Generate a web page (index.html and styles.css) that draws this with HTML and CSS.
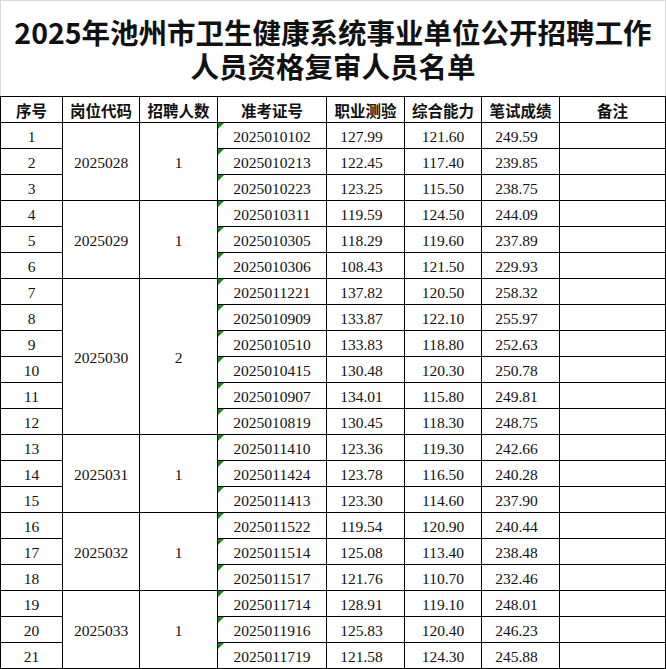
FILE: index.html
```html
<!DOCTYPE html>
<html lang="zh-CN">
<head>
<meta charset="utf-8">
<title>2025年池州市卫生健康系统事业单位公开招聘工作人员资格复审人员名单</title>
<link rel="stylesheet" href="styles.css">
</head>
<body>
<div class="sheet">
  <div class="title">
    <div class="title-line">2025年池州市卫生健康系统事业单位公开招聘工作</div>
    <div class="title-line">人员资格复审人员名单</div>
  </div>
  <table class="grid">
    <colgroup>
      <col class="c1"><col class="c2"><col class="c3"><col class="c4"><col class="c5"><col class="c6"><col class="c7"><col class="c8">
    </colgroup>
    <thead>
      <tr><th>序号</th><th>岗位代码</th><th>招聘人数</th><th>准考证号</th><th>职业测验</th><th>综合能力</th><th>笔试成绩</th><th>备注</th></tr>
    </thead>
    <tbody>
      <tr><td>1</td><td rowspan="3">2025028</td><td rowspan="3">1</td><td class="txt">2025010102</td><td class="sl">127.99</td><td>121.60</td><td class="sl">249.59</td><td></td></tr>
      <tr><td>2</td><td class="txt">2025010213</td><td class="sl">122.45</td><td>117.40</td><td class="sl">239.85</td><td></td></tr>
      <tr><td>3</td><td class="txt">2025010223</td><td class="sl">123.25</td><td>115.50</td><td class="sl">238.75</td><td></td></tr>
      <tr><td>4</td><td rowspan="3">2025029</td><td rowspan="3">1</td><td class="txt">2025010311</td><td class="sl">119.59</td><td>124.50</td><td class="sl">244.09</td><td></td></tr>
      <tr><td>5</td><td class="txt">2025010305</td><td class="sl">118.29</td><td>119.60</td><td class="sl">237.89</td><td></td></tr>
      <tr><td>6</td><td class="txt">2025010306</td><td class="sl">108.43</td><td>121.50</td><td class="sl">229.93</td><td></td></tr>
      <tr><td>7</td><td rowspan="6">2025030</td><td rowspan="6">2</td><td class="txt">2025011221</td><td class="sl">137.82</td><td>120.50</td><td class="sl">258.32</td><td></td></tr>
      <tr><td>8</td><td class="txt">2025010909</td><td class="sl">133.87</td><td>122.10</td><td class="sl">255.97</td><td></td></tr>
      <tr><td>9</td><td class="txt">2025010510</td><td class="sl">133.83</td><td>118.80</td><td class="sl">252.63</td><td></td></tr>
      <tr><td>10</td><td class="txt">2025010415</td><td class="sl">130.48</td><td>120.30</td><td class="sl">250.78</td><td></td></tr>
      <tr><td>11</td><td class="txt">2025010907</td><td class="sl">134.01</td><td>115.80</td><td class="sl">249.81</td><td></td></tr>
      <tr><td>12</td><td class="txt">2025010819</td><td class="sl">130.45</td><td>118.30</td><td class="sl">248.75</td><td></td></tr>
      <tr><td>13</td><td rowspan="3">2025031</td><td rowspan="3">1</td><td class="txt">2025011410</td><td class="sl">123.36</td><td>119.30</td><td class="sl">242.66</td><td></td></tr>
      <tr><td>14</td><td class="txt">2025011424</td><td class="sl">123.78</td><td>116.50</td><td class="sl">240.28</td><td></td></tr>
      <tr><td>15</td><td class="txt">2025011413</td><td class="sl">123.30</td><td>114.60</td><td class="sl">237.90</td><td></td></tr>
      <tr><td>16</td><td rowspan="3">2025032</td><td rowspan="3">1</td><td class="txt">2025011522</td><td class="sl">119.54</td><td>120.90</td><td class="sl">240.44</td><td></td></tr>
      <tr><td>17</td><td class="txt">2025011514</td><td class="sl">125.08</td><td>113.40</td><td class="sl">238.48</td><td></td></tr>
      <tr><td>18</td><td class="txt">2025011517</td><td class="sl">121.76</td><td>110.70</td><td class="sl">232.46</td><td></td></tr>
      <tr><td>19</td><td rowspan="3">2025033</td><td rowspan="3">1</td><td class="txt">2025011714</td><td class="sl">128.91</td><td>119.10</td><td class="sl">248.01</td><td></td></tr>
      <tr><td>20</td><td class="txt">2025011916</td><td class="sl">125.83</td><td>120.40</td><td class="sl">246.23</td><td></td></tr>
      <tr><td>21</td><td class="txt">2025011719</td><td class="sl">121.58</td><td>124.30</td><td class="sl">245.88</td><td></td></tr>
    </tbody>
  </table>
</div>
</body>
</html>
```
FILE: styles.css
```css
html, body {
  margin: 0;
  padding: 0;
  background: #ffffff;
}

.sheet {
  width: 665px;
  border-top: 1px solid #d9d9d9;
  border-right: 1px solid #d9d9d9;
  background: #ffffff;
}

.title {
  border-left: 1px solid #d9d9d9;
  height: 95px;
  box-sizing: border-box;
  padding-top: 14px;
  text-align: center;
  font-family: "Noto Sans CJK SC", "Noto Sans", sans-serif;
  font-weight: 700;
  font-size: 28.5px;
  line-height: 34px;
  color: #111111;
}

.title-line {
  height: 34px;
}

.grid {
  width: 665px;
  table-layout: fixed;
  border-collapse: collapse;
  font-family: "Liberation Serif", "Noto Sans CJK SC", serif;
  font-size: 15.5px;
  color: #111111;
}

.c1 { width: 62px; }
.c2 { width: 77px; }
.c3 { width: 78px; }
.c4 { width: 109px; }
.c5 { width: 78px; }
.c6 { width: 77px; }
.c7 { width: 78px; }
.c8 { width: 106px; }

.grid th,
.grid td {
  border: 1px solid #000000;
  height: 26px;
  padding: 0;
  text-align: center;
  vertical-align: middle;
  box-sizing: border-box;
  white-space: nowrap;
  overflow: hidden;
}

.grid th {
  font-family: "Noto Sans CJK SC", sans-serif;
  font-weight: 700;
  font-size: 15.5px;
  line-height: 20px;
}

.grid td {
  line-height: 20px;
  padding-top: 3px;
}

.grid td.sl {
  padding-right: 8px;
}

.grid td.txt {
  position: relative;
}

.grid td.txt::before {
  content: "";
  position: absolute;
  left: 0;
  top: 0;
  width: 0;
  height: 0;
  border-top: 6px solid #1b8a1b;
  border-right: 6px solid transparent;
}
```
